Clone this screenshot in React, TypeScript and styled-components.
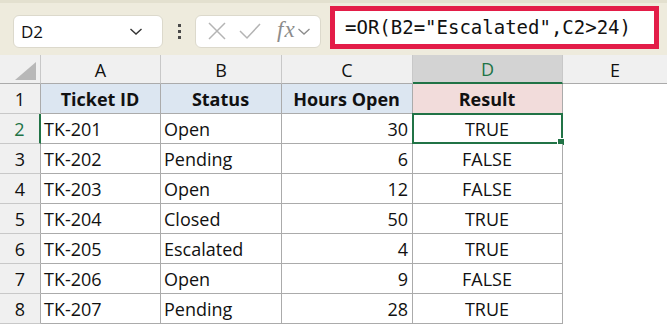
import React from 'react';
import styled, { createGlobalStyle } from 'styled-components';

const GlobalStyle = createGlobalStyle`
  html, body {
    margin: 0;
    padding: 0;
    background: #ffffff;
    overflow: hidden;
  }
`;

const Page = styled.div`
  width: 667px;
  height: 326px;
  overflow: hidden;
  font-family: 'Open Sans', 'Noto Sans', sans-serif;
  color: #111;
`;

// Полоса формул
const Toolbar = styled.div`
  height: 55px;
  box-sizing: border-box;
  background: #eeebdd;
  border-top: 3px solid #e3e0cf;
  display: flex;
  align-items: center;
  padding: 0 5px 0 13px;
`;

const NameBox = styled.div`
  width: 150px;
  height: 33px;
  box-sizing: border-box;
  background: #fff;
  border: 1px solid #dcd9cc;
  border-radius: 6px;
  display: flex;
  align-items: center;
  justify-content: space-between;
  padding: 0 19px 0 7px;
  font-size: 17px;
  margin-top: 4px;
`;

const Dots = styled.div`
  width: 32px;
  display: flex;
  flex-direction: column;
  align-items: center;
  gap: 3px;
  margin-top: 4px;

  span {
    width: 3px;
    height: 3px;
    background: #4a4a4a;
  }
`;

const FxBox = styled.div`
  width: 126px;
  height: 33px;
  box-sizing: border-box;
  background: #fff;
  border: 1px solid #dcd9cc;
  border-radius: 6px;
  display: flex;
  align-items: center;
  padding: 0 4px 0 10px;
  gap: 10px;
  margin-top: 4px;
`;

const FxLabel = styled.span`
  font-family: 'Liberation Serif', 'DejaVu Serif', serif;
  font-style: italic;
  font-size: 23px;
  color: #8c8c8c;
  margin-left: 5px;
  letter-spacing: 1px;
  line-height: 1;
  margin-top: -3px;
`;

const FormulaBox = styled.div`
  margin-left: 9px;
  width: 329px;
  height: 43px;
  box-sizing: border-box;
  border: 5px solid #e31d48;
  background: #fff;
  display: flex;
  align-items: center;
  padding-left: 10px;
  margin-top: -4px;
  font-family: 'DejaVu Sans Mono', 'Liberation Mono', monospace;
  font-size: 19px;
  color: #111;
  white-space: nowrap;
`;

// Таблица
const Grid = styled.div`
  display: grid;
  grid-template-columns: 41px 120px 121px 131px 150px 1fr;
  grid-auto-rows: 30px;
  grid-template-rows: 29px;
`;

const Corner = styled.div`
  background: #f0f0f0;
  border-right: 1px solid #c8c8c8;
  border-bottom: 1px solid #ababab;
  box-sizing: border-box;
  display: flex;
  align-items: flex-end;
  justify-content: flex-end;
  padding: 0 4px 3px 0;
`;

const ColHead = styled.div<{ $active?: boolean; $last?: boolean }>`
  background: ${p => (p.$active ? '#d3d3d3' : '#f0f0f0')};
  color: ${p => (p.$active ? '#217346' : '#111')};
  border-right: ${p => (p.$last ? 'none' : '1px solid #c8c8c8')};
  border-bottom: ${p => (p.$active ? '2px solid #217346' : '1px solid #ababab')};
  box-sizing: border-box;
  display: flex;
  align-items: center;
  justify-content: center;
  font-size: 18px;
  padding-top: 1px;
`;

const RowHead = styled.div<{ $active?: boolean }>`
  background: #f0f0f0;
  color: ${p => (p.$active ? '#217346' : '#111')};
  border-right: ${p => (p.$active ? '2px solid #217346' : '1px solid #ababab')};
  border-bottom: 1px solid #c8c8c8;
  box-sizing: border-box;
  display: flex;
  align-items: center;
  justify-content: center;
  font-size: 18px;
`;

const Cell = styled.div<{ $align?: 'left' | 'center' | 'right'; $bg?: string; $bold?: boolean }>`
  position: relative;
  background: ${p => p.$bg || '#fff'};
  border-right: 1px solid #ababab;
  border-bottom: 1px solid #ababab;
  box-sizing: border-box;
  display: flex;
  align-items: center;
  justify-content: ${p =>
    p.$align === 'center' ? 'center' : p.$align === 'right' ? 'flex-end' : 'flex-start'};
  padding: 1px 4px 0 3px;
  font-size: 18px;
  font-weight: ${p => (p.$bold ? 700 : 400)};
  white-space: nowrap;
`;

const Blank = styled.div`
  background: #fff;
`;

const Selection = styled.div`
  position: absolute;
  inset: -1px -1px -1px -1px;
  border: 2px solid #217346;
  pointer-events: none;
`;

const Handle = styled.div`
  position: absolute;
  right: -4px;
  bottom: -4px;
  width: 6px;
  height: 6px;
  background: #217346;
  border: 1px solid #fff;
`;

const rows = [
  ['TK-201', 'Open', 30, 'TRUE'],
  ['TK-202', 'Pending', 6, 'FALSE'],
  ['TK-203', 'Open', 12, 'FALSE'],
  ['TK-204', 'Closed', 50, 'TRUE'],
  ['TK-205', 'Escalated', 4, 'TRUE'],
  ['TK-206', 'Open', 9, 'FALSE'],
  ['TK-207', 'Pending', 28, 'TRUE'],
];

const Chevron = () => (
  <svg width="14" height="9" viewBox="0 0 14 9">
    <path d="M1.5 2 L7 7 L12.5 2" fill="none" stroke="#333" strokeWidth="1.4" />
  </svg>
);

const App: React.FC = () => {
  const heads = ['Ticket ID', 'Status', 'Hours Open'];

  return (
    <Page>
      <GlobalStyle />
      <Toolbar>
        <NameBox>
          <span>D2</span>
          <Chevron />
        </NameBox>
        <Dots>
          <span />
          <span />
          <span />
        </Dots>
        <FxBox>
          <svg width="22" height="22" viewBox="0 0 22 22">
            <path d="M3 3 L19 19 M19 3 L3 19" stroke="#b4b4b4" strokeWidth="1.5" fill="none" />
          </svg>
          <svg width="24" height="22" viewBox="0 0 24 22">
            <path d="M2 11 L9 18 L22 4" stroke="#b4b4b4" strokeWidth="1.5" fill="none" />
          </svg>
          <FxLabel>fx</FxLabel>
          <svg width="14" height="9" viewBox="0 0 14 9" style={{ marginLeft: -9 }}>
            <path d="M1.5 2 L7 7 L12.5 2" fill="none" stroke="#8c8c8c" strokeWidth="1.3" />
          </svg>
        </FxBox>
        <FormulaBox>=OR(B2="Escalated",C2&gt;24)</FormulaBox>
      </Toolbar>

      <Grid>
        <Corner>
          <svg width="21" height="18" viewBox="0 0 21 18">
            <path d="M21 0 L21 18 L0 18 Z" fill="#b8b8b8" />
          </svg>
        </Corner>
        <ColHead>A</ColHead>
        <ColHead>B</ColHead>
        <ColHead>C</ColHead>
        <ColHead $active>D</ColHead>
        <ColHead $last>E</ColHead>

        <RowHead>1</RowHead>
        {heads.map(h => (
          <Cell key={h} $align="center" $bg="#dce6f1" $bold>
            {h}
          </Cell>
        ))}
        <Cell $align="center" $bg="#f2dcdb" $bold>
          Result
        </Cell>
        <Blank />

        {rows.map((r, i) => (
          <React.Fragment key={r[0] as string}>
            <RowHead $active={i === 0}>{i + 2}</RowHead>
            <Cell>{r[0]}</Cell>
            <Cell>{r[1]}</Cell>
            <Cell $align="right">{r[2]}</Cell>
            <Cell $align="center">
              {r[3]}
              {i === 0 && (
                <Selection>
                  <Handle />
                </Selection>
              )}
            </Cell>
            <Blank />
          </React.Fragment>
        ))}
      </Grid>
    </Page>
  );
};

export default App;
